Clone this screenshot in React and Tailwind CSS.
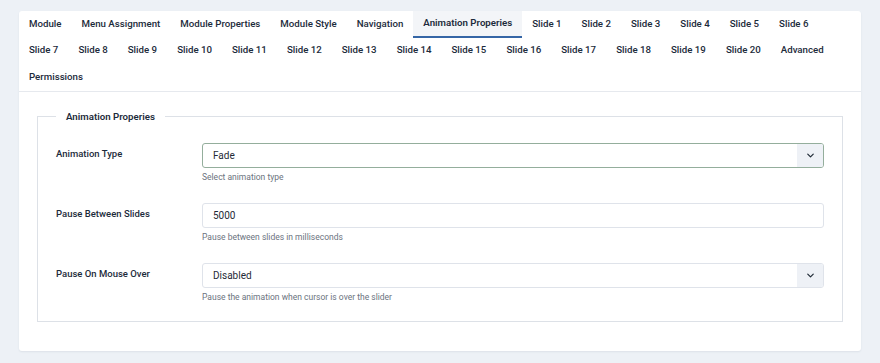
import { ChevronDown } from 'lucide-react';

const tabs = [
  'Module', 'Menu Assignment', 'Module Properties', 'Module Style', 'Navigation', 'Animation Properies',
  'Slide 1', 'Slide 2', 'Slide 3', 'Slide 4', 'Slide 5', 'Slide 6', 'Slide 7', 'Slide 8', 'Slide 9',
  'Slide 10', 'Slide 11', 'Slide 12', 'Slide 13', 'Slide 14', 'Slide 15', 'Slide 16', 'Slide 17',
  'Slide 18', 'Slide 19', 'Slide 20', 'Advanced', 'Permissions',
];

const SelectBox = ({ value, valid }) => (
  <div
    className={`flex items-center h-[25px] rounded-[3px] border bg-white ${valid ? 'border-[#94ae9c]' : 'border-[#dfe3ea]'}`}
  >
    <span className="flex-1 pl-[10px] text-[10px] text-[#1f2a36]">{value}</span>
    <span className="flex items-center justify-center w-[26px] h-[23px] bg-[#eef1f6] rounded-r-[2px]">
      <ChevronDown size={11} strokeWidth={2.6} className="text-[#1f2a36]" />
    </span>
  </div>
);

const Field = ({ label, help, children }) => (
  <div className="flex">
    <div className="w-[146px] pt-[4px] text-[9.5px] font-medium text-[#1c2b3b]">{label}</div>
    <div className="flex-1">
      {children}
      <div className="mt-[3px] text-[8.5px] leading-[12px] text-[#6b7380]">{help}</div>
    </div>
  </div>
);

const App = () => {
  const activeTab = 'Animation Properies';

  return (
    <div className="min-h-screen bg-[#edf1f6] pt-[11px] px-[19px]" style={{ fontFamily: 'Roboto, "Noto Sans", sans-serif' }}>
      <div className="bg-white rounded-[3px] shadow-[0_1px_2px_rgba(30,50,80,0.08)] pb-[29px]">
        {/* Tabs */}
        <div className="flex flex-wrap border-b border-[#e6e9ee]">
          {tabs.map(tab => (
            <div
              key={tab}
              className={`flex items-center h-[26.5px] px-[10px] text-[9.7px] text-[#1c2b3b] ${
                tab === activeTab ? 'bg-[#f3f5f8] font-semibold border-b-2 border-[#3566a6]' : 'font-medium'
              }`}
            >
              {tab}
            </div>
          ))}
        </div>

        {/* Fieldset */}
        <fieldset className="mx-[18px] mt-[18px] border border-[#dde1e7] px-[18px] pt-[19px] pb-[18px]">
          <legend className="px-[10px] text-[9.7px] font-semibold text-[#1c2b3b]">Animation Properies</legend>
          <div className="flex flex-col gap-[20px]">
            <Field label="Animation Type" help="Select animation type">
              <SelectBox value="Fade" valid />
            </Field>
            <Field label="Pause Between Slides" help="Pause between slides in milliseconds">
              <div className="flex items-center h-[25px] rounded-[3px] border border-[#dfe3ea] bg-white pl-[10px] text-[10px] text-[#1f2a36]">
                5000
              </div>
            </Field>
            <Field label="Pause On Mouse Over" help="Pause the animation when cursor is over the slider">
              <SelectBox value="Disabled" />
            </Field>
          </div>
        </fieldset>
      </div>
    </div>
  );
};

export default App;
